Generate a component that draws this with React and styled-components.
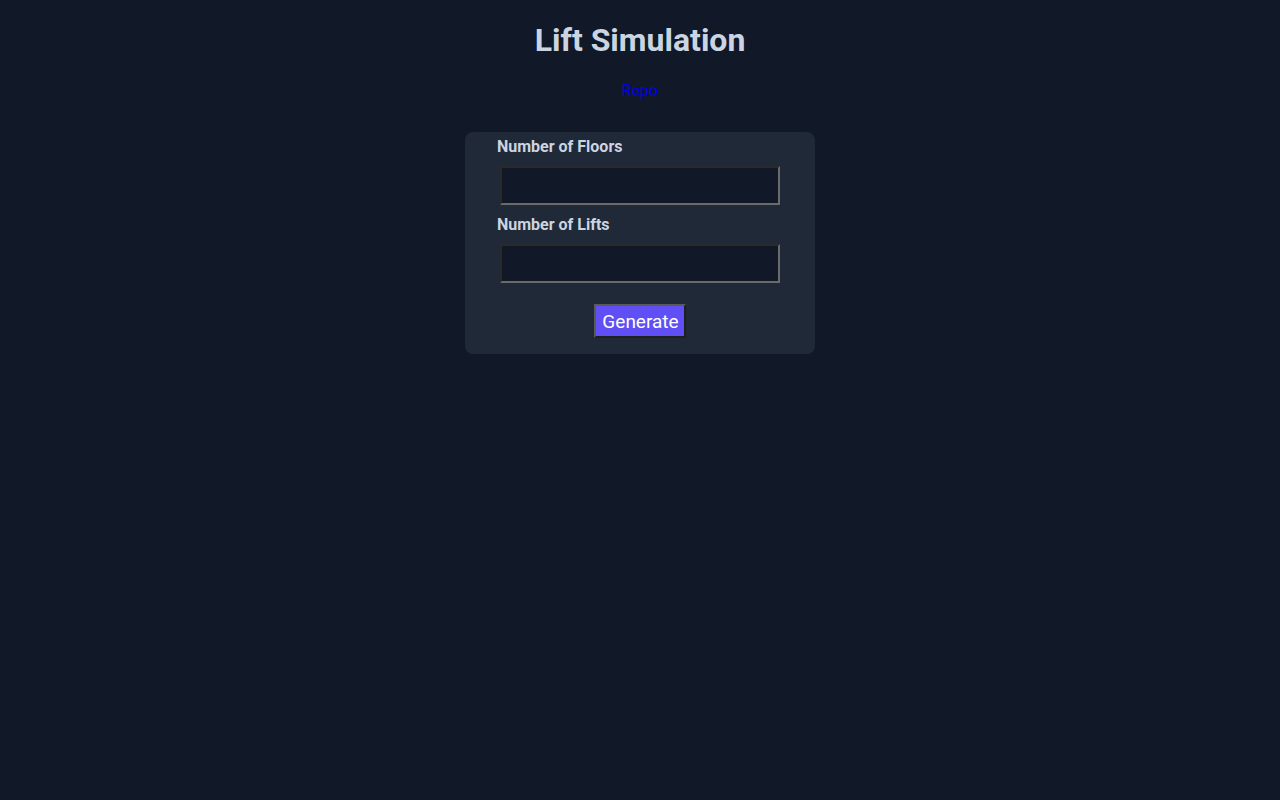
import styled, { createGlobalStyle } from 'styled-components';

const GlobalStyle = createGlobalStyle`
	body {
		margin: 0;
		background-color: #111827;
		font-family: Roboto, "Liberation Sans", sans-serif;
		color: #cbd5e1;
	}
`;

const Page = styled.div`
	display: flex;
	flex-direction: column;
	align-items: center;
	min-height: 100vh;
	padding-top: 1px;
`;

const Title = styled.h1`
	font-size: 32px;
	font-weight: 700;
	margin: 20px 0 0;
	color: #cbd5e1;
`;

const RepoLink = styled.a`
	margin-top: 22px;
	font-size: 16px;
	color: #0000ee;
`;

const Card = styled.div`
	display: flex;
	flex-direction: column;
	width: 350px;
	box-sizing: border-box;
	margin-top: 32px;
	padding: 5px 32px 16px;
	background-color: #1f2937;
	border-radius: 8px;
`;

const Label = styled.label`
	font-size: 16px;
	font-weight: 700;
	line-height: 19px;
	margin-top: ${({ $first }) => ($first ? '0' : '10px')};
`;

const Input = styled.input`
	align-self: center;
	width: 280px;
	height: 39px;
	box-sizing: border-box;
	margin-top: 10px;
	background-color: #111827;
	color: #cbd5e1;
	border: 2px solid #6b6b6b;
	border-top-color: #2a2a2a;
	border-left-color: #2a2a2a;
	font-size: 16px;
	font-family: inherit;
	outline: none;
`;

const Button = styled.button`
	align-self: center;
	margin-top: 21px;
	height: 34px;
	padding: 0 5px 0 6px;
	background-color: #604ff4;
	color: #ffffff;
	font-family: inherit;
	font-size: 19px;
	border: 2px solid #5a5a5a;
	border-right-color: #1f1f1f;
	border-bottom-color: #1f1f1f;
	cursor: pointer;
`;

const App = () => {
	return (
		<>
			<GlobalStyle />
			<Page>
				<Title>Lift Simulation</Title>
				<RepoLink href="#">Repo</RepoLink>
				<Card>
					<Label $first>Number of Floors</Label>
					<Input type="number" />
					<Label>Number of Lifts</Label>
					<Input type="number" />
					<Button>Generate</Button>
				</Card>
			</Page>
		</>
	);
};

export default App;
